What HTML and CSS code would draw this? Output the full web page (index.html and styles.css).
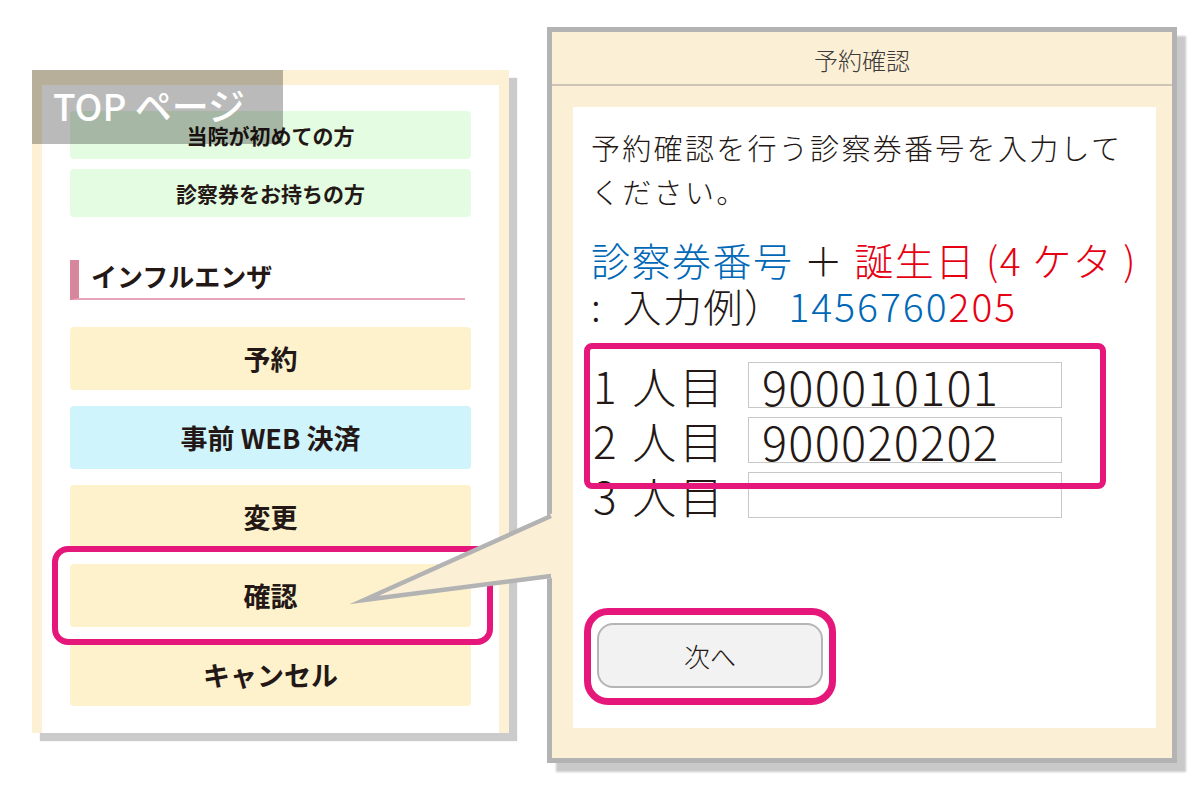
FILE: index.html
```html
<!DOCTYPE html>
<html lang="ja">
<head>
<meta charset="UTF-8" />
<meta name="viewport" content="width=device-width, initial-scale=1" />
<title>予約確認</title>
<link rel="stylesheet" href="styles.css">
</head>
<body>
  <div class="stage">
    <!-- スマホ画面（TOP ページ） -->
    <section class="phone">
      <div class="top-label">TOP ページ</div>
      <div class="phone-body">
        <a class="menu-btn">当院が初めての方</a>
        <a class="menu-btn">診察券をお持ちの方</a>
        <h2 class="section-title">インフルエンザ</h2>
        <a class="big-btn">予約</a>
        <a class="big-btn big-btn-blue">事前 WEB 決済</a>
        <a class="big-btn">変更</a>
        <a class="big-btn">確認</a>
        <a class="big-btn">キャンセル</a>
      </div>
    </section>

    <!-- 予約確認ダイアログ -->
    <section class="dialog">
      <header class="dialog-head">予約確認</header>
      <div class="dialog-body">
        <p class="lead">予約確認を行う診察券番号を入力して<br>ください。</p>
        <p class="formula">
          <span class="blue">診察券番号</span> ＋ <span class="red">誕生日 (4 ケタ )</span><br>:&nbsp;&nbsp;入力例）<span class="digits"><span class="blue">1456760</span><span class="red">205</span></span>
        </p>
        <div class="rows">
          <label class="row"><span class="row-label">1 人目</span><input class="row-input" type="text" value="900010101"></label>
          <label class="row"><span class="row-label">2 人目</span><input class="row-input" type="text" value="900020202"></label>
          <label class="row"><span class="row-label">3 人目</span><input class="row-input" type="text" value=""></label>
        </div>
        <button class="next-btn" type="button">次へ</button>
      </div>
    </section>

    <!-- 強調枠と吹き出し -->
    <div class="ring ring-confirm"></div>
    <div class="ring ring-rows"></div>
    <div class="ring ring-next"></div>
    <svg class="callout" width="1200" height="800" viewBox="0 0 1200 800">
      <polygon points="364,600 553,513 553,578" fill="#fbf0d6" />
      <polyline points="551,516 364,600 551,576" fill="none" stroke="#b3b3b3" stroke-width="4.5" stroke-miterlimit="12" />
    </svg>
  </div>
</body>
</html>
```

FILE: styles.css
```css
body {
  margin: 0;
  background: #fff;
  font-family: "Noto Sans CJK JP", "Noto Sans", sans-serif;
  color: #231815;
}
.stage {
  position: relative;
  width: 1200px;
  height: 800px;
  display: flex;
  align-items: flex-start;
  gap: 38px;
  padding: 27px 0 0 32px;
  box-sizing: border-box;
  overflow: hidden;
}

/* 左：スマホ画面 */
.phone {
  position: relative;
  width: 477px;
  margin-top: 43px;
  padding: 15px 10px 0;
  box-sizing: border-box;
  background: #fcf0d5;
  box-shadow: 8px 8px 1px #cbcbcb;
}
.top-label {
  position: absolute;
  left: 0;
  top: 0;
  width: 251px;
  height: 74px;
  padding-left: 21px;
  box-sizing: border-box;
  background: rgba(0, 0, 0, 0.27);
  color: #fff;
  font-size: 37px;
  font-weight: 500;
  line-height: 70px;
}
.phone-body {
  display: flex;
  flex-direction: column;
  background: #fff;
  padding: 26px 28px 27px;
}
.menu-btn {
  height: 48px;
  display: flex;
  align-items: center;
  justify-content: center;
  background: #e4fde2;
  border-radius: 4px;
  font-size: 21px;
  font-weight: 700;
}
.menu-btn + .menu-btn {
  margin-top: 10px;
}
.section-title {
  margin: 43px 6px 27px 0;
  height: 40px;
  box-sizing: border-box;
  padding-left: 12px;
  border-left: 9px solid #d8869e;
  border-bottom: 2px solid #e6a6ba;
  font-size: 26px;
  font-weight: 700;
  line-height: 31px;
}
.big-btn {
  height: 63px;
  display: flex;
  align-items: center;
  justify-content: center;
  background: #fef2cc;
  border-radius: 4px;
  font-size: 27px;
  font-weight: 700;
}
.big-btn + .big-btn {
  margin-top: 16px;
}
.big-btn-blue {
  background: #cff4fc;
}

/* 右：予約確認ダイアログ */
.dialog {
  width: 630px;
  border: 5px solid #b3b3b3;
  box-sizing: border-box;
  background: #fbf0d6;
  box-shadow: 9px 9px 2px #c9c9c9;
}
.dialog-head {
  height: 54px;
  box-sizing: border-box;
  padding-top: 4px;
  border-bottom: 2px solid #cdc6b8;
  text-align: center;
  font-size: 24px;
  font-weight: 300;
  line-height: 48px;
  color: #3e3a39;
}
.dialog-body {
  height: 621px;
  margin: 21px 16px 30px 21px;
  padding: 18px 0 0 18px;
  box-sizing: border-box;
  background: #fff;
  font-weight: 300;
}
.lead {
  margin: 0;
  font-size: 29px;
  letter-spacing: 2.3px;
  line-height: 44px;
}
.formula {
  margin: 23px 0 0;
  font-size: 39px;
  letter-spacing: 1.5px;
  line-height: 46px;
}
.digits {
  margin-left: 4px;
  letter-spacing: 2px;
}
.blue {
  color: #0068b7;
}
.red {
  color: #e60012;
}
.rows {
  margin-top: 34px;
  display: flex;
  flex-direction: column;
  gap: 9px;
}
.row {
  display: flex;
  align-items: center;
  height: 46px;
  padding-left: 2px;
}
.row-label {
  width: 155px;
  font-size: 44px;
  letter-spacing: 3px;
  line-height: 46px;
}
.row-input {
  width: 314px;
  height: 46px;
  box-sizing: border-box;
  margin: 0;
  padding: 0 0 0 13px;
  border: 1px solid #c8c8c8;
  border-radius: 0;
  background: #fff;
  font-family: inherit;
  font-size: 47px;
  font-weight: 300;
  letter-spacing: 1.2px;
  line-height: 44px;
  color: #231815;
  outline: none;
}
.next-btn {
  display: block;
  width: 226px;
  height: 65px;
  margin: 105px 0 0 6px;
  background: #f2f2f2;
  border: 2px solid #b5b5b5;
  border-radius: 16px;
  font-family: inherit;
  font-size: 26px;
  font-weight: 300;
  color: #231815;
}

/* 強調枠・吹き出し */
.ring {
  position: absolute;
  box-sizing: border-box;
  border: 6px solid #e5177b;
}
.ring-confirm {
  left: 52px;
  top: 546px;
  width: 441px;
  height: 99px;
  border-radius: 16px;
}
.ring-rows {
  left: 584px;
  top: 343px;
  width: 522px;
  height: 146px;
  border-radius: 8px;
}
.ring-next {
  left: 584px;
  top: 608px;
  width: 252px;
  height: 97px;
  border-width: 7px;
  border-radius: 24px;
}
.callout {
  position: absolute;
  left: 0;
  top: 0;
  pointer-events: none;
}
```
